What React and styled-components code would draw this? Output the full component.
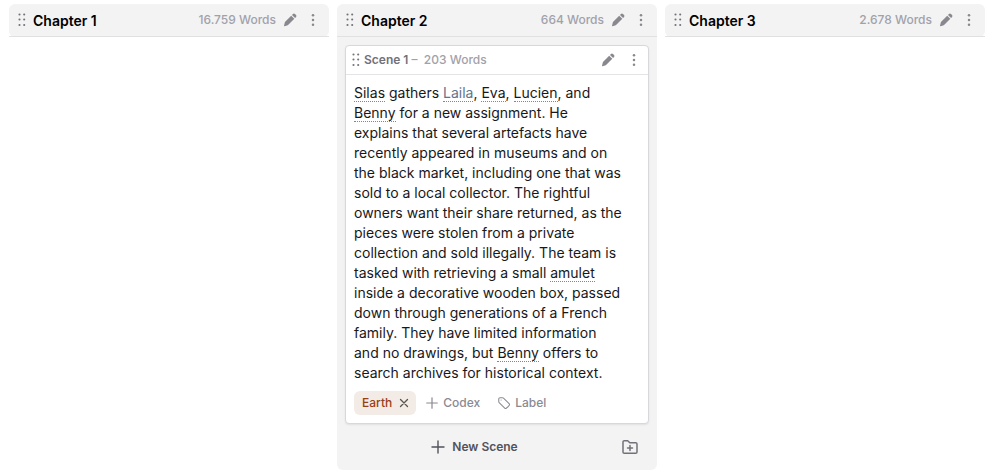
import React from 'react'
import styled, { createGlobalStyle } from 'styled-components'

const GlobalStyle = createGlobalStyle`
  *,
  *::before,
  *::after {
    box-sizing: border-box;
  }

  body {
    margin: 0;
    background: #fff;
    color: #18181b;
    font-family: Inter, 'Liberation Sans', sans-serif;
    font-size: 14px;
    line-height: 20px;
  }
`

const Board = styled.main`
  display: flex;
  align-items: flex-start;
  gap: 8px;
  padding: 4px 13px 4px 9px;
`

const Column = styled.section`
  flex: 1 1 0;
  min-width: 0;
  border-radius: 6px;
  background: #f3f3f3;
`

const ColumnHeader = styled.header`
  display: flex;
  align-items: center;
  height: 33px;
  padding: 0 8px 0 9px;
  border-bottom: 1px solid #e1e1e3;
`

const ColumnTitle = styled.h2`
  flex: 1;
  margin: 0 0 0 7px;
  padding-top: 2px;
  color: #000;
  font-size: 14px;
  font-weight: 600;
`

const WordCount = styled.span`
  color: #a1a1aa;
  font-size: 12px;
  font-weight: 500;
`

const IconButton = styled.button`
  display: inline-flex;
  align-items: center;
  justify-content: center;
  padding: 0;
  border: 0;
  background: none;
  color: ${({ $color }) => $color || '#88888f'};
  cursor: pointer;

  &:hover {
    color: #3f3f46;
  }
`

const Actions = styled.div`
  display: flex;
  gap: ${({ $gap }) => $gap || '7px'};
  margin-left: ${({ $push }) => ($push ? 'auto' : '6px')};
`

const CardList = styled.div`
  padding: 8px 8px 0;
`

const Card = styled.article`
  border: 1px solid #d8d8dc;
  border-radius: 4px;
  background: #fff;
  box-shadow: 0 1px 2px rgba(0, 0, 0, 0.08);
`

const CardHeader = styled.header`
  display: flex;
  align-items: center;
  height: 29px;
  padding: 0 6px;
  border-bottom: 1px solid #e4e4e7;
  color: #a1a1aa;
  font-size: 12px;
  font-weight: 500;
`

const CardTitle = styled.h3`
  margin: 0 3px 0 4px;
  color: #71717a;
  font-size: 12px;
  font-weight: 600;
`

const Summary = styled.p`
  margin: 0;
  padding: 8px 24px 8px 8px;
`

const Mention = styled.a`
  border-bottom: 1px dotted #85858d;
  color: ${({ $muted }) => ($muted ? '#64748b' : 'inherit')};
  text-decoration: none;
`

const Tags = styled.footer`
  display: flex;
  align-items: center;
  gap: 9px;
  padding: 0 8px 8px;
`

const Tag = styled.span`
  display: inline-flex;
  align-items: center;
  gap: 6px;
  height: 24px;
  padding: 0 6px 0 8px;
  border-radius: 6px;
  background: #f3ebe6;
  color: #9a3f12;
  font-size: 12px;
  font-weight: 500;
`

const TextButton = styled.button`
  display: inline-flex;
  align-items: center;
  justify-content: center;
  gap: ${({ $large }) => ($large ? '6px' : '4px')};
  height: 24px;
  padding: ${({ $large }) => ($large ? '0 18px 0 0' : '0 8px 0 0')};
  border: 0;
  background: none;
  color: ${({ $large }) => ($large ? '#52525b' : '#8a8a92')};
  font: inherit;
  font-size: 12px;
  font-weight: ${({ $large }) => ($large ? 600 : 500)};
  cursor: pointer;
`

const ColumnFooter = styled.footer`
  display: flex;
  align-items: center;
  padding: 11px 18px 11px 8px;

  ${TextButton} {
    flex: 1;
  }
`

const GripIcon = () => (
  <svg width="8" height="14" viewBox="0 0 8 14" fill="#71717a" aria-hidden="true">
    {[1.5, 6.5, 12].map(y => (
      <React.Fragment key={y}>
        <circle cx="1.5" cy={y} r="1.05" />
        <circle cx="6.2" cy={y} r="1.05" />
      </React.Fragment>
    ))}
  </svg>
)

const PencilIcon = () => (
  <svg width="16" height="16" viewBox="0 0 16 16" fill="currentColor" aria-hidden="true">
    <path d="M9.2 3.7l3.100 3.100-6 6a1.500 1.500 0 0 1-.6.4l-3.200 1a.4.4 0 0 1-.5-.5l.8-3.300a1.500 1.500 0 0 1 .4-.7z" />
    <path d="M10 2.900l.9-.9a1.500 1.500 0 0 1 2.100 0l1 1a1.500 1.500 0 0 1 0 2.100l-.9.9z" />
  </svg>
)

const DotsIcon = () => (
  <svg width="16" height="16" viewBox="0 0 16 16" fill="currentColor" aria-hidden="true">
    <circle cx="8" cy="3.3" r="1.25" />
    <circle cx="8" cy="8" r="1.25" />
    <circle cx="8" cy="12.7" r="1.25" />
  </svg>
)

const PlusIcon = ({ size }) => (
  <svg width={size} height={size} viewBox="0 0 16 16" fill="none" stroke="currentColor" strokeWidth="1.4" aria-hidden="true">
    <path d="M8 2v12M2 8h12" strokeLinecap="round" />
  </svg>
)

const CloseIcon = () => (
  <svg width="12" height="12" viewBox="0 0 12 12" fill="none" stroke="currentColor" strokeWidth="1.3" aria-hidden="true">
    <path d="M2.5 2.5l7 7M9.5 2.5l-7 7" strokeLinecap="round" />
  </svg>
)

const TagIcon = () => (
  <svg width="14" height="14" viewBox="0 0 24 24" fill="none" stroke="currentColor" strokeWidth="1.8" strokeLinecap="round" strokeLinejoin="round" aria-hidden="true">
    <path d="M9.568 3H5.25A2.25 2.25 0 0 0 3 5.25v4.318c0 .597.237 1.17.659 1.591l9.581 9.581c.699.699 1.78.872 2.607.33a18.095 18.095 0 0 0 5.223-5.223c.542-.827.369-1.908-.33-2.607L11.16 3.66A2.25 2.25 0 0 0 9.568 3Z" />
    <path d="M7 7h.008v.008H7V7Z" />
  </svg>
)

const FolderPlusIcon = () => (
  <svg width="18" height="18" viewBox="0 0 18 18" fill="none" stroke="currentColor" strokeWidth="1.5" strokeLinecap="round" strokeLinejoin="round" aria-hidden="true">
    <path d="M2 14V4a1.300 1.300 0 0 1 1.300-1.300h3.400l2.100 2h5.900A1.300 1.300 0 0 1 16 6v8a1.300 1.300 0 0 1-1.300 1.300H3.300A1.300 1.300 0 0 1 2 14Z" />
    <path d="M9 7.500v5M6.500 10h5" />
  </svg>
)

function Chapter({ title, words, children }) {
  return (
    <Column>
      <ColumnHeader>
        <GripIcon />
        <ColumnTitle>{title}</ColumnTitle>
        <WordCount>{words} Words</WordCount>
        <Actions>
          <IconButton aria-label="Edit chapter">
            <PencilIcon />
          </IconButton>
          <IconButton aria-label="Chapter menu">
            <DotsIcon />
          </IconButton>
        </Actions>
      </ColumnHeader>
      {children}
    </Column>
  )
}

function Scene() {
  return (
    <Card>
      <CardHeader>
        <GripIcon />
        <CardTitle>Scene 1</CardTitle>
        <span>–&nbsp; 203 Words</span>
        <Actions $push $gap="10px">
          <IconButton aria-label="Edit scene">
            <PencilIcon />
          </IconButton>
          <IconButton aria-label="Scene menu">
            <DotsIcon />
          </IconButton>
        </Actions>
      </CardHeader>
      <Summary>
        <Mention href="#silas">Silas</Mention> gathers{' '}
        <Mention href="#laila" $muted>
          Laila
        </Mention>
        , <Mention href="#eva">Eva</Mention>, <Mention href="#lucien">Lucien</Mention>, and{' '}
        <Mention href="#benny">Benny</Mention> for a new assignment. He explains that several artefacts have recently
        appeared in museums and on the black market, including one that was sold to a local collector. The rightful
        owners want their share returned, as the pieces were stolen from a private collection and sold illegally. The
        team is tasked with retrieving a small <Mention href="#amulet">amulet</Mention> inside a decorative wooden box,
        passed down through generations of a French family. They have limited information and no drawings, but{' '}
        <Mention href="#benny">Benny</Mention> offers to search archives for historical context.
      </Summary>
      <Tags>
        <Tag>
          Earth
          <IconButton aria-label="Remove Earth" $color="#57534e">
            <CloseIcon />
          </IconButton>
        </Tag>
        <TextButton>
          <PlusIcon size={14} />
          Codex
        </TextButton>
        <TextButton>
          <TagIcon />
          Label
        </TextButton>
      </Tags>
    </Card>
  )
}

export default function App() {
  return (
    <>
      <GlobalStyle />
      <Board>
        <Chapter title="Chapter 1" words="16.759" />
        <Chapter title="Chapter 2" words="664">
          <CardList>
            <Scene />
          </CardList>
          <ColumnFooter>
            <TextButton $large>
              <PlusIcon size={16} />
              New Scene
            </TextButton>
            <IconButton aria-label="New folder" $color="#71717a">
              <FolderPlusIcon />
            </IconButton>
          </ColumnFooter>
        </Chapter>
        <Chapter title="Chapter 3" words="2.678" />
      </Board>
    </>
  )
}
